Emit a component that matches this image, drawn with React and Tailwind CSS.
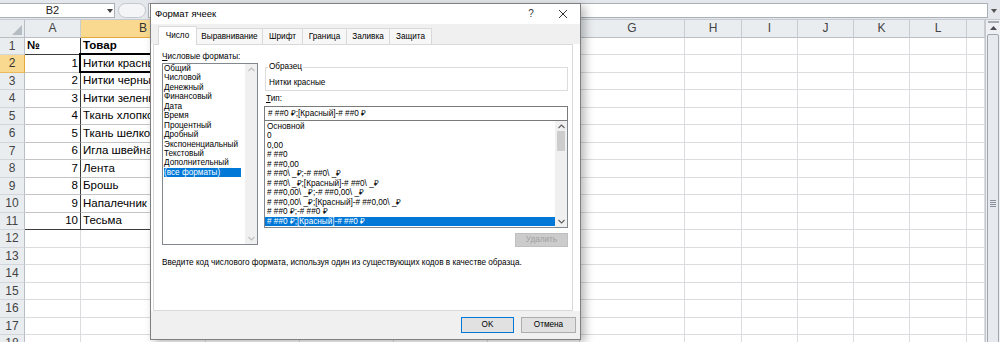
import React from "react";

const colWidths = "grid-cols-[25px_56px_125px_94px_94px_94px_92px_105px_57px_56px_56px_56px_57px_18px]";
const letters = ["", "A", "B", "C", "D", "E", "F", "G", "H", "I", "J", "K", "L", ""];
const goods = [
  "Нитки красные",
  "Нитки черные",
  "Нитки зеленые",
  "Ткань хлопковая",
  "Ткань шелковая",
  "Игла швейная",
  "Лента",
  "Брошь",
  "Напалечник",
  "Тесьма",
];
const categories = [
  "Общий",
  "Числовой",
  "Денежный",
  "Финансовый",
  "Дата",
  "Время",
  "Процентный",
  "Дробный",
  "Экспоненциальный",
  "Текстовый",
  "Дополнительный",
  "(все форматы)",
];
const formats = [
  "Основной",
  "0",
  "0,00",
  "# ##0",
  "# ##0,00",
  "# ##0\\ _₽;-# ##0\\ _₽",
  "# ##0\\ _₽;[Красный]-# ##0\\ _₽",
  "# ##0,00\\ _₽;-# ##0,00\\ _₽",
  "# ##0,00\\ _₽;[Красный]-# ##0,00\\ _₽",
  "# ##0 ₽;-# ##0 ₽",
  "# ##0 ₽;[Красный]-# ##0 ₽",
];
const tabs = [
  { name: "Число", w: "w-[39px]" },
  { name: "Выравнивание", w: "w-[66px]" },
  { name: "Шрифт", w: "w-[40px]" },
  { name: "Граница", w: "w-[44px]" },
  { name: "Заливка", w: "w-[43px]" },
  { name: "Защита", w: "w-[42px]" },
];

const Chevron = ({ up, color = "#606060" }) => (
  <svg width="7" height="5" viewBox="0 0 7 5">
    <polyline
      points={up ? "0.5,4 3.5,1 6.5,4" : "0.5,1 3.5,4 6.5,1"}
      fill="none"
      stroke={color}
      strokeWidth="1.1"
    />
  </svg>
);

const cellValue = (r, c) => {
  if (r === 1 && c === 1) return "№";
  if (r === 1 && c === 2) return "Товар";
  if (r <= 11 && c === 1) return r - 1;
  if (r <= 11 && c === 2) return goods[r - 2];
  return "";
};

const cellClass = (r, c) => {
  let cls = "relative flex items-center overflow-visible whitespace-nowrap border-r border-b ";
  const inTable = r <= 11 && (c === 1 || c === 2);
  if (inTable) {
    cls += "border-r-[#3c3c3c] ";
    cls += r === 1 || r === 11 ? "border-b-[#3c3c3c] " : "border-b-[#c4c4c4] ";
  } else {
    cls += "border-r-[#dadcdf] border-b-[#dadcdf] ";
  }
  // numbers go right, text (and the № header) go left
  if (c === 1 && r > 1) cls += "justify-end pr-[2px] ";
  else cls += "pl-[2px] ";
  if (r === 1) cls += "font-bold ";
  return cls;
};

const Sheet = () => {
  const rows = Array.from({ length: 18 }, (_, i) => i + 1);
  return (
    <div className={`grid ${colWidths} auto-rows-[17.5px] w-[985px] text-[11.5px] text-black`}>
      {/* header row */}
      {letters.map((l, c) =>
        c === 0 ? (
          <div key="corner" className="relative bg-[#e9ecef] border-r border-b border-[#b9bec5] flex items-end justify-end p-[2px]">
            <svg width="10" height="10" viewBox="0 0 10 10">
              <polygon points="10,0 10,10 0,10" fill="#b6bcc4" />
            </svg>
          </div>
        ) : (
          <div
            key={"h" + c}
            className={
              "flex items-center justify-center border-r border-b text-[12px] " +
              (c === 2
                ? "bg-[#f9d98f] border-r-[#e9b95a] border-b-[#e4a83a] text-[#333]"
                : "bg-[#eaedf0] border-r-[#c8ccd1] border-b-[#b9bec5] text-[#444]")
            }
          >
            {l}
          </div>
        )
      )}
      {rows.map((r) => (
        <React.Fragment key={r}>
          <div
            className={
              "flex items-center justify-center border-r border-b text-[12px] " +
              (r === 2
                ? "bg-[#f9d98f] border-r-[#e4a83a] border-b-[#e9b95a] text-[#333]"
                : "bg-[#eaedf0] border-r-[#b9bec5] border-b-[#d2d6db] text-[#444]")
            }
          >
            {r}
          </div>
          {letters.slice(1).map((_, i) => {
            const c = i + 1;
            return (
              <div key={c} className={cellClass(r, c)}>
                {cellValue(r, c)}
                {r === 2 && c === 2 && (
                  <div className="absolute -left-[2px] -top-[2px] -right-[1px] -bottom-[1px] border-2 border-black"></div>
                )}
              </div>
            );
          })}
        </React.Fragment>
      ))}
    </div>
  );
};

const FormulaBar = () => (
  <div className="h-[20px] flex items-start pt-[3px] bg-[#e4e7eb] border-b border-[#c6cbd1]">
    <div className="w-[115px] h-[15px] bg-white border border-l-0 border-[#aab0b8] flex items-center text-[11px] text-[#222]">
      <span className="w-[105px] text-center">B2</span>
      <svg width="6" height="4" viewBox="0 0 6 4" className="ml-[2px]">
        <polygon points="0,0 6,0 3,4" fill="#444" />
      </svg>
    </div>
    <div className="ml-[3px] w-[28px] h-[15px] rounded-full border border-[#c3c8ce] bg-[#f4f5f7]"></div>
    <div className="ml-[2px] flex-1 h-[15px] bg-white border border-[#aab0b8]"></div>
    <div className="w-[12px] h-[15px] flex items-center justify-center">
      <svg width="6" height="4" viewBox="0 0 6 4">
        <polygon points="0,0 6,0 3,4" fill="#555" />
      </svg>
    </div>
  </div>
);

const ScrollBar = () => (
  <div className="w-[15px] h-[322px] bg-[#eef0f3] border-l border-[#c4c9cf] flex flex-col items-center overflow-hidden">
    <div className="mt-[1px] w-[11px] h-[4px] border border-[#a5abb3] bg-[#f4f5f7]"></div>
    <div className="mt-[3px] h-[10px] flex items-center">
      <svg width="7" height="4" viewBox="0 0 7 4">
        <polygon points="0,4 7,4 3.5,0" fill="#4a4f57" />
      </svg>
    </div>
    <div className="mt-[4px] w-[12px] h-[340px] shrink-0 rounded-[2px] border border-[#a0a6ae] bg-[#e6e9ed] flex flex-col items-center pt-[165px] gap-[1px]">
      <div className="w-[6px] h-[1px] bg-[#8a9099]"></div>
      <div className="w-[6px] h-[1px] bg-[#8a9099]"></div>
      <div className="w-[6px] h-[1px] bg-[#8a9099]"></div>
      <div className="w-[6px] h-[1px] bg-[#8a9099]"></div>
    </div>
  </div>
);

const ListScroll = ({ thumb }) => (
  <div className="w-[12px] h-full bg-[#f0f0f0] flex flex-col items-center justify-between py-[3px]">
    <div className="flex flex-col items-center w-full">
      <Chevron up color={thumb ? "#606060" : "#bdbdbd"} />
      {thumb && <div className="mt-[2px] w-[8px] h-[20px] bg-[#cdcdcd]"></div>}
    </div>
    <Chevron color={thumb ? "#606060" : "#bdbdbd"} />
  </div>
);

const Dialog = () => (
  <div className="absolute left-[150px] top-[3px] w-[431px] h-[337px] border border-[#7f7f7f] bg-white shadow-[4px_3px_9px_rgba(0,0,0,0.28)] flex flex-col text-[8.2px] leading-[10px] text-black">
    <div className="h-[20px] shrink-0 flex items-center pl-[4px] pr-[12px]">
      <span className="text-[9.5px]">Формат ячеек</span>
      <span className="ml-auto w-[10px] text-center text-[10px] text-[#333]">?</span>
      <svg width="10" height="10" viewBox="0 0 10 10" className="ml-[22px]">
        <path d="M1 1 L9 9 M9 1 L1 9" stroke="#333" strokeWidth="1" />
      </svg>
    </div>
    <div className="h-[20px] shrink-0 bg-[#f0f0f0] flex items-end pl-[7px]">
      {tabs.map((t, i) =>
        i === 0 ? (
          <div key={t.name} className={`relative z-10 -mb-[1px] h-[19px] ${t.w} bg-white border border-b-0 border-[#d9d9d9] flex items-center justify-center`}>
            {t.name}
          </div>
        ) : (
          <div key={t.name} className={`h-[16px] ${t.w} bg-[#f7f7f7] border-t border-r border-[#d9d9d9] flex items-center justify-center`}>
            {t.name}
          </div>
        )
      )}
    </div>
    <div className="ml-[2px] w-[420px] h-[267px] shrink-0 border border-[#d9d9d9] bg-white">
      <div className="flex">
        <div className="ml-[8px] w-[96px] flex flex-col">
          <div className="mt-[7px]">
            <span className="underline">Ч</span>исловые форматы:
          </div>
          <div className="mt-[1px] h-[182px] border border-[#828790] flex">
            <div className="flex-1 pl-[1px]">
              {categories.map((c) => (
                <div
                  key={c}
                  className={
                    "leading-[9.45px] h-[9.45px] whitespace-nowrap " +
                    (c === "(все форматы)" ? "bg-[#0078d7] text-white w-[77px]" : "")
                  }
                >
                  {c}
                </div>
              ))}
            </div>
            <ListScroll />
          </div>
        </div>
        <div className="ml-[6px] w-[304px] flex flex-col">
          <div className="mt-[22px] ml-[1px] h-[24px] border border-[#dcdcdc]">
            <span className="block w-fit -mt-[6px] ml-[2px] px-[1px] bg-white">Образец</span>
            <div className="mt-[6px] ml-[3px]">Нитки красные</div>
          </div>
          <div className="mt-[3px] ml-[2px]">
            <span className="underline">Т</span>ип:
          </div>
          <div className="mt-[2px] h-[15px] border border-[#7a7a7a] pl-[3px] flex items-center whitespace-nowrap">
            # ##0 ₽;[Красный]-# ##0 ₽
          </div>
          <div className="h-[107px] border border-t-0 border-[#828790] flex">
            <div className="flex-1 pt-[0.5px]">
              {formats.map((f, i) => (
                <div
                  key={f}
                  className={
                    "leading-[9.5px] h-[9.5px] pl-[2px] whitespace-nowrap " +
                    (i === formats.length - 1 ? "bg-[#0078d7] text-white" : "")
                  }
                >
                  {f}
                </div>
              ))}
            </div>
            <ListScroll thumb />
          </div>
          <div className="mt-[5px] self-end w-[53px] h-[14px] bg-[#cccccc] border border-[#bfbfbf] text-[#a0a0a0] flex items-center justify-center">
            Удалить
          </div>
        </div>
      </div>
      <div className="mt-[11px] ml-[8px] whitespace-nowrap">
        Введите код числового формата, используя один из существующих кодов в качестве образца.
      </div>
    </div>
    <div className="flex-1 bg-[#f0f0f0] flex items-start justify-end pt-[6px] pr-[4px] gap-[7px]">
      <div className="w-[53px] h-[16px] bg-[#e1e1e1] border border-[#0078d7] flex items-center justify-center">OK</div>
      <div className="w-[55px] h-[16px] bg-[#e1e1e1] border border-[#adadad] flex items-center justify-center">Отмена</div>
    </div>
  </div>
);

const App = () => {
  return (
    <div className="relative w-[1000px] h-[342px] overflow-hidden bg-white font-['Liberation_Sans',Arial,sans-serif]">
      <FormulaBar />
      <div className="flex">
        <Sheet />
        <ScrollBar />
      </div>
      <Dialog />
    </div>
  );
};

export default App;
